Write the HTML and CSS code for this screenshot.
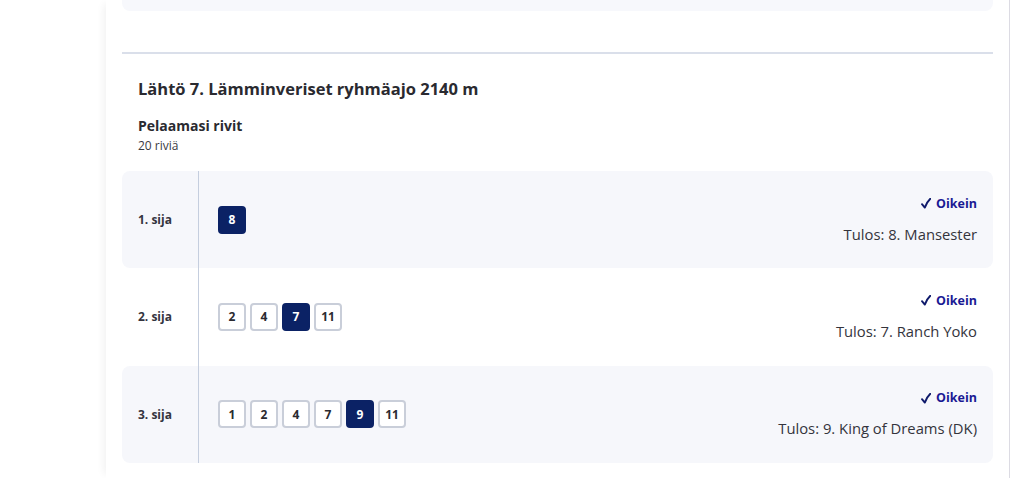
FILE: index.html
```html
<!DOCTYPE html>
<html lang="fi">
<head>
<meta charset="utf-8">
<link rel="stylesheet" href="styles.css">
</head>
<body>
<div class="page">
  <div class="panel">
    <div class="prev-card"></div>
    <div class="divider"></div>
    <section class="race">
      <h2 class="race-title">Lähtö 7. Lämminveriset ryhmäajo 2140 m</h2>
      <div class="played">
        <div class="played-title">Pelaamasi rivit</div>
        <div class="played-count">20 riviä</div>
      </div>
    </section>
    <div class="rows">
      <div class="row shaded">
        <div class="place">1. sija</div>
        <div class="picks">
          <span class="pick hit">8</span>
        </div>
        <div class="result">
          <div class="ok"><svg class="tick" viewBox="0 0 10 11"><path d="M1 6.2 L3.8 9.6 Q5.5 4.5 9.3 0.8"/></svg>Oikein</div>
          <div class="outcome">Tulos: 8. Mansester</div>
        </div>
      </div>
      <div class="row">
        <div class="place">2. sija</div>
        <div class="picks">
          <span class="pick">2</span>
          <span class="pick">4</span>
          <span class="pick hit">7</span>
          <span class="pick">11</span>
        </div>
        <div class="result">
          <div class="ok"><svg class="tick" viewBox="0 0 10 11"><path d="M1 6.2 L3.8 9.6 Q5.5 4.5 9.3 0.8"/></svg>Oikein</div>
          <div class="outcome">Tulos: 7. Ranch Yoko</div>
        </div>
      </div>
      <div class="row shaded">
        <div class="place">3. sija</div>
        <div class="picks">
          <span class="pick">1</span>
          <span class="pick">2</span>
          <span class="pick">4</span>
          <span class="pick">7</span>
          <span class="pick hit">9</span>
          <span class="pick">11</span>
        </div>
        <div class="result">
          <div class="ok"><svg class="tick" viewBox="0 0 10 11"><path d="M1 6.2 L3.8 9.6 Q5.5 4.5 9.3 0.8"/></svg>Oikein</div>
          <div class="outcome">Tulos: 9. King of Dreams (DK)</div>
        </div>
      </div>
    </div>
  </div>
</div>
</body>
</html>
```

FILE: styles.css
```css
* { box-sizing: border-box; }
html, body { margin: 0; padding: 0; background: #ffffff; }
body {
  font-family: "Open Sans", Arial, sans-serif;
  color: #2b2b33;
  width: 1035px;
  height: 478px;
  overflow: hidden;
}
.page {
  display: flex;
  height: 478px;
}
.panel {
  margin-left: 106px;
  width: 904px;
  height: 478px;
  padding: 0 16px;
  background: #ffffff;
  border-right: 1px solid #dcdbe3;
  box-shadow: -6px 0 8px -4px rgba(0, 0, 0, 0.06);
}
.prev-card {
  height: 11px;
  background: #f7f8fc;
  border-radius: 0 0 8px 8px;
}
.divider {
  height: 2px;
  margin-top: 41px;
  background: #dadfea;
}
.race {
  padding: 23px 16px 0;
}
.race-title {
  margin: 0;
  font-size: 16.5px;
  line-height: 24px;
  font-weight: 700;
  color: #2a2a30;
}
.played {
  margin-top: 16px;
}
.played-title {
  font-size: 14px;
  line-height: 18px;
  font-weight: 700;
  color: #2a2a30;
}
.played-count {
  margin-top: 2px;
  font-size: 12px;
  line-height: 18px;
  color: #3a3a42;
}
.rows {
  margin-top: 16px;
}
.row {
  display: flex;
  align-items: stretch;
  height: 97.33px;
  border-radius: 8px;
}
.row.shaded { background: #f6f7fb; }
.place {
  width: 77px;
  flex: 0 0 77px;
  padding-left: 16px;
  display: flex;
  align-items: center;
  font-size: 12px;
  font-weight: 700;
  color: #34343e;
  border-right: 1px solid #c5cede;
}
.picks {
  flex: 1;
  display: flex;
  align-items: center;
  gap: 4px;
  padding-left: 19px;
}
.pick {
  width: 28px;
  height: 28px;
  display: flex;
  align-items: center;
  justify-content: center;
  border: 2px solid #c9ced9;
  border-radius: 4px;
  background: #ffffff;
  font-size: 12px;
  font-weight: 700;
  color: #2a2a30;
}
.pick.hit {
  background: #0b2265;
  border-color: #0b2265;
  color: #ffffff;
}
.result {
  display: flex;
  flex-direction: column;
  justify-content: center;
  align-items: flex-end;
  padding-right: 16px;
  gap: 12px;
}
.ok {
  display: flex;
  align-items: center;
  gap: 5px;
  font-size: 12.5px;
  line-height: 16px;
  font-weight: 700;
  color: #1b1a94;
}
.tick {
  width: 10px;
  height: 11px;
  fill: none;
  stroke: #0f1a6b;
  stroke-width: 1.9;
  stroke-linecap: round;
  stroke-linejoin: round;
}
.outcome {
  font-size: 14.8px;
  line-height: 20px;
  color: #34343c;
}
```
